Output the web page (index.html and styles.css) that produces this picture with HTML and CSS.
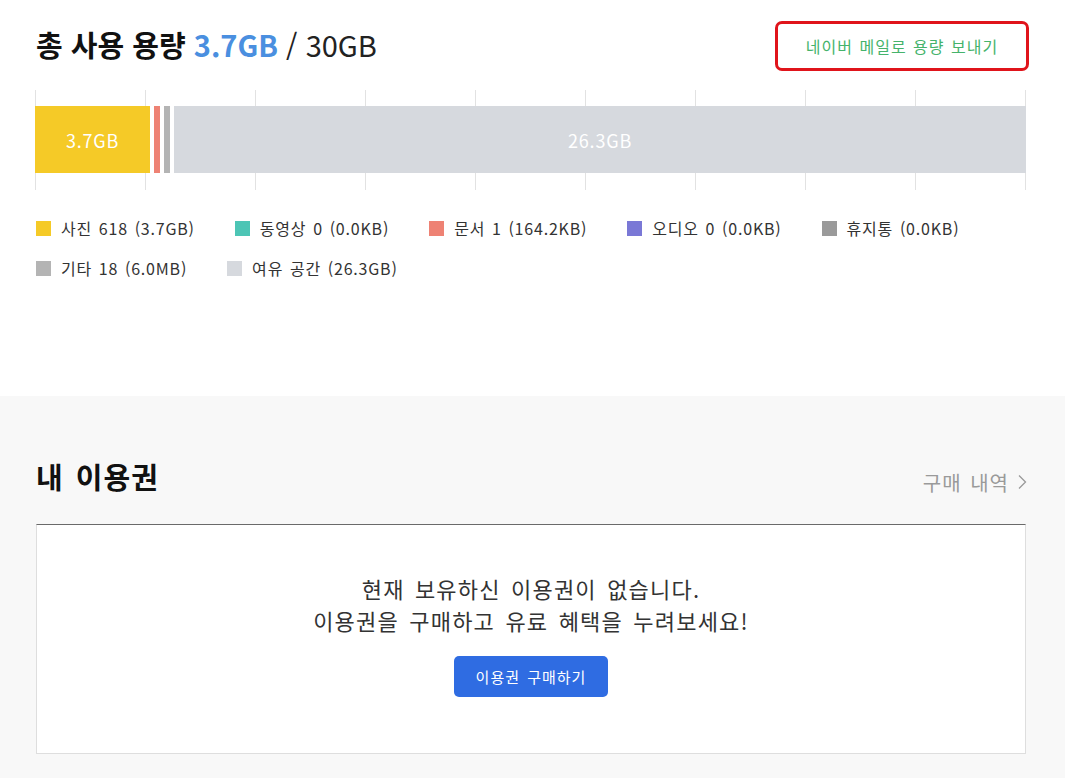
FILE: index.html
```html
<!DOCTYPE html>
<html lang="ko">
<head>
<meta charset="utf-8">
<title>용량</title>
<link rel="stylesheet" href="styles.css">
</head>
<body>
<section class="usage">
  <div class="usage-head">
    <h1 class="usage-title">총 사용 용량 <span class="used">3.7GB</span> <span class="total">/ 30GB</span></h1>
    <button class="send-btn">네이버 메일로 용량 보내기</button>
  </div>
  <div class="chart">
    <div class="bar">
      <div class="seg seg-photo">3.7GB</div>
      <div class="seg seg-doc"></div>
      <div class="seg seg-etc"></div>
      <div class="seg seg-free">26.3GB</div>
    </div>
  </div>
  <ul class="legend">
    <li><i class="sw sw-photo"></i>사진 618 (3.7GB)</li>
    <li><i class="sw sw-video"></i>동영상 0 (0.0KB)</li>
    <li><i class="sw sw-doc"></i>문서 1 (164.2KB)</li>
    <li><i class="sw sw-audio"></i>오디오 0 (0.0KB)</li>
    <li><i class="sw sw-trash"></i>휴지통 (0.0KB)</li>
    <li><i class="sw sw-etc"></i>기타 18 (6.0MB)</li>
    <li><i class="sw sw-free"></i>여유 공간 (26.3GB)</li>
  </ul>
</section>
<section class="pass">
  <div class="pass-head">
    <h2 class="pass-title">내 이용권</h2>
    <a class="history">구매 내역<svg class="chev" width="9" height="16" viewBox="0 0 9 16"><path d="M1 1.5 L7.5 8 L1 14.5" fill="none" stroke="#9a9a9a" stroke-width="1.3"/></svg></a>
  </div>
  <div class="card">
    <p class="empty">현재 보유하신 이용권이 없습니다.<br>이용권을 구매하고 유료 혜택을 누려보세요!</p>
    <button class="buy-btn">이용권 구매하기</button>
  </div>
</section>
</body>
</html>
```

FILE: styles.css
```css
* { box-sizing: border-box; }
html, body { margin: 0; padding: 0; }
body {
  font-family: "Noto Sans CJK KR", "Noto Sans", sans-serif;
  color: #222;
  background: #f8f8f8;
  width: 1065px;
  min-height: 778px;
}
.usage {
  background: #fff;
  height: 396px;
  padding: 21px 36px 0 35px;
}
.usage-head {
  display: flex;
  justify-content: space-between;
  align-items: center;
  height: 50px;
}
.usage-title {
  margin: 0;
  font-size: 29px;
  font-weight: 700;
  color: #111;
  letter-spacing: 0;
  word-spacing: 0;
  line-height: 40px;
  padding-left: 1px;
  padding-bottom: 4px;
}
.used { color: #4a8fe0; }
.total { font-weight: 400; color: #222; }
.send-btn {
  width: 254px;
  height: 50px;
  margin-right: 0;
  border: 3px solid #e0141b;
  border-radius: 7px;
  background: #fff;
  color: #45b36b;
  font-family: inherit;
  font-size: 16px;
  padding: 0;
  letter-spacing: 1px;
  word-spacing: 1px;
}
.chart {
  margin-top: 19px;
  width: 991px;
  height: 100px;
  padding-top: 16px;
  background: repeating-linear-gradient(to right, #e2e2e2 0 1px, transparent 1px 110px);
}
.bar {
  display: flex;
  gap: 4px;
  height: 67px;
  background: #fff;
}
.seg {
  display: flex;
  align-items: center;
  justify-content: center;
  color: #fff;
  font-size: 18px;
  letter-spacing: 0.8px;
  padding-top: 1px;
}
.seg-photo { width: 115px; background: #f5ca27; }
.seg-doc { width: 6px; background: #ee8274; }
.seg-etc { width: 6px; background: #b4b4b4; }
.seg-free { flex: 1; background: #d6d9de; }
.legend {
  list-style: none;
  margin: 26px 0 0;
  padding: 0 0 0 1px;
  display: flex;
  flex-wrap: wrap;
  column-gap: 40px;
  row-gap: 16px;
  width: 990px;
}
.legend li {
  display: flex;
  align-items: center;
  font-size: 16px;
  line-height: 24px;
  color: #333;
  letter-spacing: 0.8px;
  word-spacing: 1.5px;
}
.sw {
  width: 15px;
  height: 15px;
  margin-right: 10px;
}
.sw-photo { background: #f5ca27; }
.sw-video { background: #4dc5b5; }
.sw-doc { background: #ee8274; }
.sw-audio { background: #7a78d6; }
.sw-trash { background: #9a9a9a; }
.sw-etc { background: #b4b4b4; }
.sw-free { background: #d6d9de; }

.pass {
  padding: 56px 38px 0 36px;
}
.pass-head {
  display: flex;
  justify-content: space-between;
  align-items: center;
  height: 48px;
}
.pass-title {
  margin: 0;
  font-size: 29px;
  font-weight: 700;
  color: #111;
  letter-spacing: 1px;
  word-spacing: 3px;
}
.history {
  display: flex;
  align-items: center;
  gap: 9px;
  font-size: 20px;
  color: #9a9a9a;
  margin-top: 12px;
  letter-spacing: 1px;
  word-spacing: 2px;
}
.card {
  margin-top: 24px;
  width: 990px;
  height: 230px;
  background: #fff;
  border: 1px solid #dedede;
  border-top: 1px solid #6a6a6a;
  display: flex;
  flex-direction: column;
  align-items: center;
  padding-top: 47px;
}
.empty {
  margin: 0;
  text-align: center;
  font-size: 22px;
  line-height: 32px;
  color: #333;
  letter-spacing: 1.2px;
  word-spacing: 3px;
}
.buy-btn {
  margin-top: 20px;
  width: 154px;
  height: 41px;
  border: 0;
  border-radius: 5px;
  background: #2f6ce2;
  color: #fff;
  font-family: inherit;
  font-size: 15px;
  padding: 0;
  letter-spacing: 1px;
  word-spacing: 2px;
}
```
